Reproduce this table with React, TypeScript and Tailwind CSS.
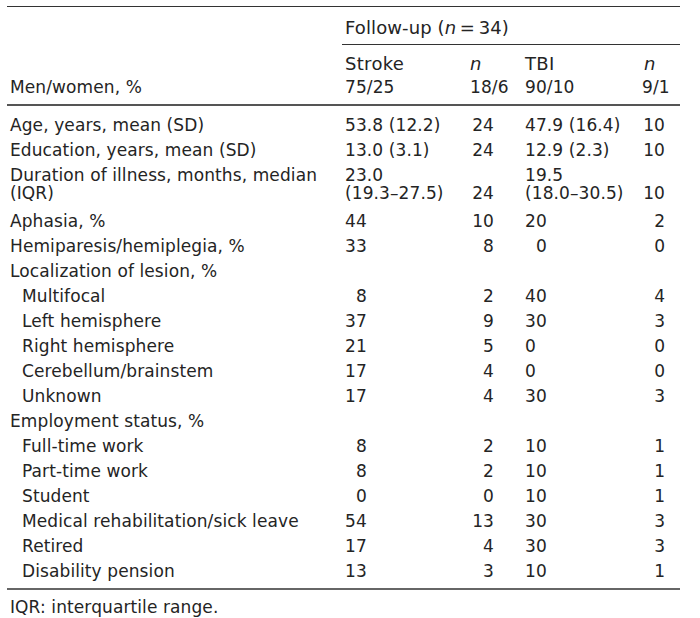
const FS = '\u2007';

type Row = {
  label: string;
  indent?: boolean;
  s?: string;
  sn?: string;
  t?: string;
  tn?: string;
  cls?: string;
};

const rows: Row[] = [
  { label: 'Age, years, mean (SD)', s: '53.8 (12.2)', sn: '24', t: '47.9 (16.4)', tn: '10', cls: 'pt-[10px]' },
  { label: 'Education, years, mean (SD)', s: '13.0 (3.1)', sn: '24', t: '12.9 (2.3)', tn: '10' },
  { label: 'Duration of illness, months, median (IQR)', s: '23.0\n(19.3–27.5)', sn: '24', t: '19.5\n(18.0–30.5)', tn: '10', cls: 'pb-[7px]' },
  { label: 'Aphasia, %', s: '44', sn: '10', t: '20', tn: '2' },
  { label: 'Hemiparesis/hemiplegia, %', s: '33', sn: '8', t: FS + '0', tn: '0' },
  { label: 'Localization of lesion, %' },
  { label: 'Multifocal', indent: true, s: FS + '8', sn: '2', t: '40', tn: '4' },
  { label: 'Left hemisphere', indent: true, s: '37', sn: '9', t: '30', tn: '3' },
  { label: 'Right hemisphere', indent: true, s: '21', sn: '5', t: '0', tn: '0' },
  { label: 'Cerebellum/brainstem', indent: true, s: '17', sn: '4', t: '0', tn: '0' },
  { label: 'Unknown', indent: true, s: '17', sn: '4', t: '30', tn: '3' },
  { label: 'Employment status, %' },
  { label: 'Full-time work', indent: true, s: FS + '8', sn: '2', t: '10', tn: '1' },
  { label: 'Part-time work', indent: true, s: FS + '8', sn: '2', t: '10', tn: '1' },
  { label: 'Student', indent: true, s: FS + '0', sn: '0', t: '10', tn: '1' },
  { label: 'Medical rehabilitation/sick leave', indent: true, s: '54', sn: '13', t: '30', tn: '3' },
  { label: 'Retired', indent: true, s: '17', sn: '4', t: '30', tn: '3' },
  { label: 'Disability pension', indent: true, s: '13', sn: '3', t: '10', tn: '1', cls: 'pb-[8px]' },
];

export default function App() {
  return (
    <div className="w-[700px] h-[618px] bg-white text-[#242424] text-[17px] leading-[18px] tracking-[0.1px] font-['DejaVu_Sans','Verdana',sans-serif]">
      <div className="pt-[6px] pl-[7px]">
        <table className="table-fixed border-collapse w-[673px]">
          <colgroup>
            <col className="w-[335px]" />
            <col className="w-[125px]" />
            <col className="w-[51px]" />
            <col className="w-[121px]" />
            <col className="w-[41px]" />
          </colgroup>
          <thead>
            <tr className="border-t border-[#333]">
              <th className="h-[38px]" />
              <th colSpan={4} className="font-normal text-left align-middle pl-[3px] pt-[5px] border-b border-[#333] text-[18px] whitespace-nowrap">
                Follow-up (<i>n</i>{'\u2009'}={'\u2009'}34)
              </th>
            </tr>
            <tr>
              <th className="h-[28px]" />
              <th className="font-normal text-left align-bottom pl-[3px] text-[18px] tracking-[0.3px]">Stroke</th>
              <th className="font-normal text-left align-bottom pl-[3px] text-[18px]"><i>n</i></th>
              <th className="font-normal text-left align-bottom pl-[7px] text-[18px] tracking-[0.3px]">TBI</th>
              <th className="font-normal text-left align-bottom pl-[5px] text-[18px]"><i>n</i></th>
            </tr>
            <tr className="border-b-2 border-[#555]">
              <th className="font-normal text-left pl-[3px] pt-[5px] pb-[8px]">Men/women, %</th>
              <th className="font-normal text-left pl-[3px] pt-[5px] pb-[8px]">75/25</th>
              <th className="font-normal text-left pl-[3px] pt-[5px] pb-[8px] whitespace-nowrap">18/6</th>
              <th className="font-normal text-left pl-[7px] pt-[5px] pb-[8px]">90/10</th>
              <th className="font-normal text-left pl-[3px] pt-[5px] pb-[8px] whitespace-nowrap">9/1</th>
            </tr>
          </thead>
          <tbody>
            {rows.map((r, i) => (
              <tr key={i} className={i === rows.length - 1 ? 'border-b-2 border-[#666]' : ''}>
                <td className={`align-top py-[3.5px] ${r.indent ? 'pl-[15px]' : 'pl-[3px]'} ${r.cls ?? ''}`}>
                  {r.label}
                </td>
                <td className={`align-top py-[3.5px] pl-[3px] whitespace-pre ${r.cls ?? ''}`}>{r.s}</td>
                <td className={`align-bottom py-[3.5px] pr-[24px] text-right ${r.cls ?? ''}`}>{r.sn}</td>
                <td className={`align-top py-[3.5px] pl-[7px] whitespace-pre ${r.cls ?? ''}`}>{r.t}</td>
                <td className={`align-bottom py-[3.5px] pr-[15px] text-right ${r.cls ?? ''}`}>{r.tn}</td>
              </tr>
            ))}
          </tbody>
        </table>
        <div className="pl-[3px] pt-[8px]">IQR: interquartile range.</div>
      </div>
    </div>
  );
}
